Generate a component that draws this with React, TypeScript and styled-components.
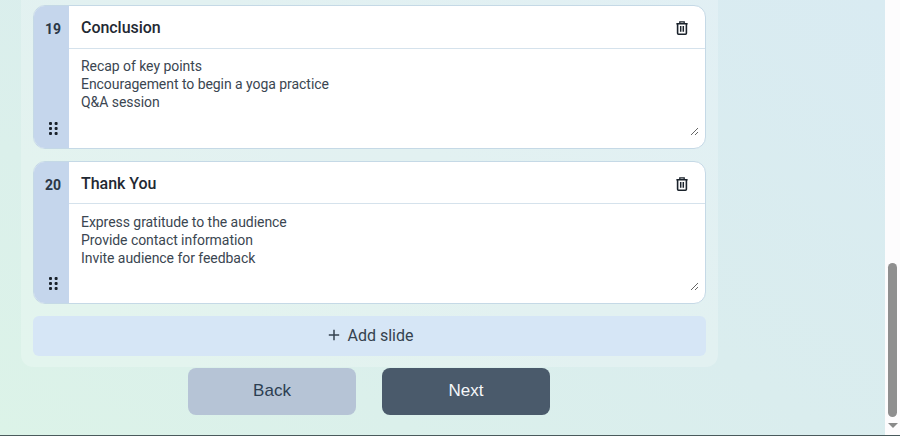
import React from "react";
import styled, { createGlobalStyle } from "styled-components";

const Global = createGlobalStyle`
  html, body { margin: 0; padding: 0; height: 100%; overflow: hidden; }
  * { box-sizing: border-box; }
`;

const Screen = styled.div`
  display: flex;
  width: 900px;
  height: 436px;
  border-bottom: 1px solid #4a5a5c;
  overflow: hidden;
`;

const Page = styled.main`
  flex: 1;
  min-width: 0;
  padding-left: 21px;
  background: linear-gradient(35deg, #dcf3e8 0%, #daedee 55%, #d9ebf2 100%);
`;

const Column = styled.div`
  display: flex;
  flex-direction: column;
  align-items: center;
  width: 697px;
`;

const Panel = styled.section`
  display: flex;
  flex-direction: column;
  gap: 12px;
  width: 100%;
  padding: 5.2px 12px 11px;
  background: rgba(255, 255, 255, 0.22);
  border-radius: 0 0 12px 12px;
`;

const Card = styled.article`
  display: flex;
  height: 143.5px;
  border: 1px solid #c5d9e6;
  border-radius: 12px;
  overflow: hidden;
  background: #fff;
`;

const Rail = styled.div`
  display: flex;
  flex: 0 0 35px;
  flex-direction: column;
  align-items: center;
  justify-content: space-between;
  padding: 15px 0 13px 3px;
  background: #c5d6ec;
`;

const Num = styled.span`
  font: 700 14px/17px Roboto, sans-serif;
  color: #2a3746;
`;

const Body = styled.div`
  display: flex;
  flex: 1;
  min-width: 0;
  flex-direction: column;
`;

const Head = styled.header`
  display: flex;
  flex: 0 0 42.6px;
  align-items: center;
  justify-content: space-between;
  padding: 2.2px 17px 0 12px;
  border-bottom: 1px solid #d5e2ec;
`;

const Title = styled.h3`
  margin: 0;
  font: 500 16px/20px Roboto, sans-serif;
  letter-spacing: -0.04px;
  color: #1f2933;
`;

const IconButton = styled.button`
  display: flex;
  padding: 0;
  border: 0;
  background: none;
  color: #1a222b;
`;

const Notes = styled.textarea`
  flex: 1;
  display: block;
  min-height: 0;
  margin: 0 6px 12px 0;
  padding: 8.4px 6px 0 12px;
  border: 0;
  outline: 0;
  resize: vertical;
  font: 400 14px/18px Roboto, sans-serif;
  letter-spacing: -0.05px;
  color: #3b4651;
  background: #fff;
`;

const AddSlide = styled.button`
  display: flex;
  align-items: center;
  justify-content: center;
  gap: 8px;
  height: 40px;
  padding: 0 0 2px 2px;
  border: 0;
  border-radius: 6px;
  background: #d6e6f6;
  font: 400 16px Roboto, sans-serif;
  color: #35424f;
`;

const Actions = styled.nav`
  display: flex;
  gap: 26px;
  margin: 1px 1px 0 0;
`;

const NavButton = styled.button<{ $primary?: boolean }>`
  width: 168px;
  height: 47px;
  padding: 0 0 2px;
  border: 0;
  border-radius: 8px;
  background: ${(p) => (p.$primary ? "#4a5a6b" : "#b6c4d6")};
  color: ${(p) => (p.$primary ? "#f5f7f9" : "#2c3e52")};
  font: 400 17px "Liberation Sans", sans-serif;
`;

const Track = styled.aside`
  display: flex;
  flex: 0 0 15px;
  flex-direction: column;
  align-items: center;
  justify-content: flex-end;
  background: #fdfcfd;
  padding-bottom: 7px;
`;

const Thumb = styled.div`
  width: 9px;
  height: 154px;
  border-radius: 5px;
  background: #8f8f8f;
`;

const Arrow = styled.div`
  width: 0;
  height: 0;
  margin-top: 6px;
  border-left: 5px solid transparent;
  border-right: 5px solid transparent;
  border-top: 5px solid #8a8a8a;
`;

const Trash = () => (
  <svg width="12" height="14" viewBox="0 0 12 14" fill="none" stroke="currentColor">
    <path d="M.4 2.7h11.2" strokeWidth="1.5" />
    <path d="M3.8 2.4V.9h4.4v1.5" strokeWidth="1.3" />
    <path d="M1.6 2.7v9.6c0 .5.4.9.9.9h7c.5 0 .9-.4.9-.9V2.7" strokeWidth="1.6" />
    <path d="M4.7 5v5.8M7.3 5v5.8" strokeWidth="1.5" />
  </svg>
);

const Grip = () => (
  <svg width="9" height="13" viewBox="0 0 9 13" fill="#1a222b">
    {[0, 5, 10].map((y) =>
      [0, 5.6].map((x) => <rect key={`${x}-${y}`} x={x} y={y} width="3" height="3" rx="1" />)
    )}
  </svg>
);

const Plus = () => (
  <svg width="12" height="12" viewBox="0 0 12 12" stroke="#35424f" strokeWidth="1.5">
    <path d="M6 .8v10.4M.8 6h10.4" />
  </svg>
);

const slides = [
  { n: 19, title: "Conclusion", text: "Recap of key points\nEncouragement to begin a yoga practice\nQ&A session" },
  { n: 20, title: "Thank You", text: "Express gratitude to the audience\nProvide contact information\nInvite audience for feedback" },
];

export default function App() {
  return (
    <Screen>
      <Global />
      <Page>
        <Column>
          <Panel>
            {slides.map((s) => (
              <Card key={s.n}>
                <Rail>
                  <Num>{s.n}</Num>
                  <Grip />
                </Rail>
                <Body>
                  <Head>
                    <Title>{s.title}</Title>
                    <IconButton aria-label="Delete slide"><Trash /></IconButton>
                  </Head>
                  <Notes defaultValue={s.text} />
                </Body>
              </Card>
            ))}
            <AddSlide><Plus />Add slide</AddSlide>
          </Panel>
          <Actions>
            <NavButton>Back</NavButton>
            <NavButton $primary>Next</NavButton>
          </Actions>
        </Column>
      </Page>
      <Track>
        <Thumb />
        <Arrow />
      </Track>
    </Screen>
  );
}
